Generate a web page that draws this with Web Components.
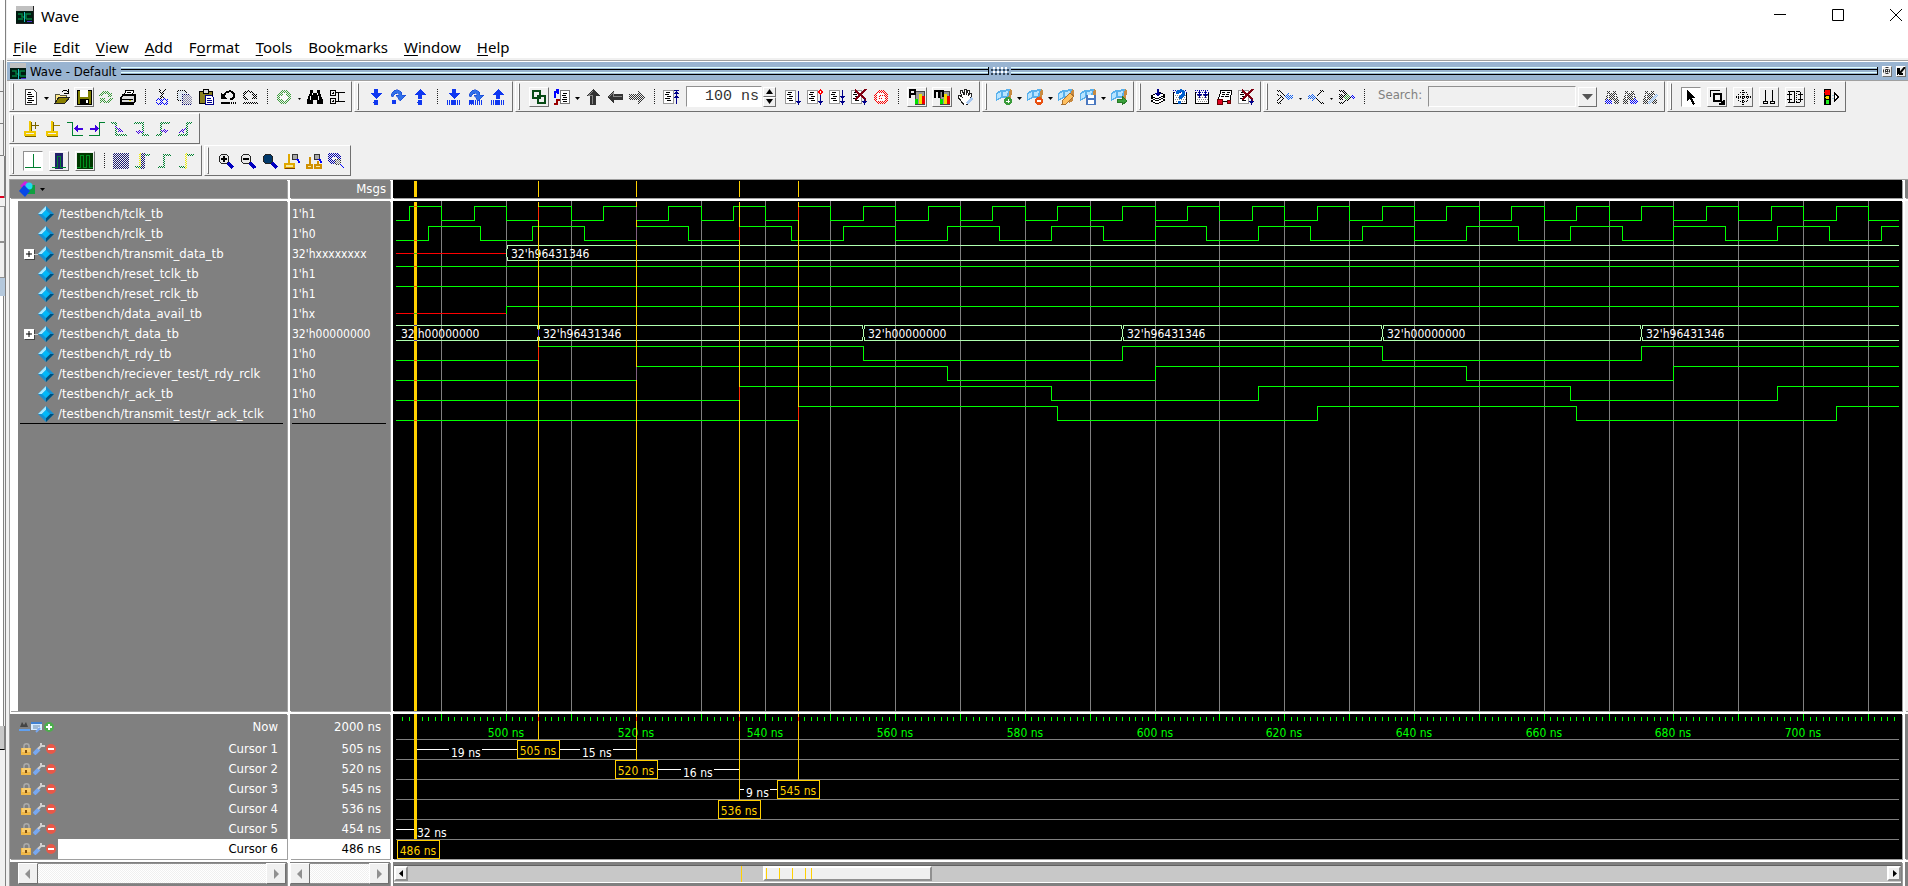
<!DOCTYPE html>
<html lang="en">
<head>
<meta charset="utf-8">
<title>Wave</title>
<style>
html,body{height:100%}
body{margin:0;background:#f0f0f0;font:12px/20px "DejaVu Sans Condensed","Noto Sans",sans-serif;color:#000}
.row{display:flex;gap:2px;height:32px}
</style>
</head>
<body>
<wave-window>
  <title-bar></title-bar>
  <menu-bar></menu-bar>
  <dock-bar></dock-bar>
  <tool-rows>
    <div class="row">
      <tool-bar label="Standard">
        <tool-btn icon="doc" label="New"></tool-btn><tool-drop label="New menu"></tool-drop><tool-btn icon="open" label="Open"></tool-btn><tool-btn icon="save" label="Save" tight raised></tool-btn><tool-btn icon="reload" label="Reload" off></tool-btn><tool-btn icon="print" label="Print"></tool-btn><tool-sep></tool-sep><tool-btn icon="cut" label="Cut" off></tool-btn><tool-btn icon="copy" label="Copy" off></tool-btn><tool-btn icon="paste" label="Paste"></tool-btn><tool-btn icon="undo" label="Undo"></tool-btn><tool-btn icon="redo" label="Redo" off></tool-btn><tool-sep></tool-sep><tool-btn icon="addgreen" label="Add" off></tool-btn><tool-drop small label="Add menu"></tool-drop><tool-btn icon="find" label="Find"></tool-btn><tool-btn icon="tree" label="Expand"></tool-btn>
      </tool-bar>
      <tool-bar label="Step">
        <tool-btn icon="stepin" label="Step"></tool-btn><tool-btn icon="stepover" label="Step over"></tool-btn><tool-btn icon="stepout" label="Step out"></tool-btn><tool-sep></tool-sep><tool-btn icon="stepinc" label="Step current"></tool-btn><tool-btn icon="stepoverc" label="Step over current"></tool-btn><tool-btn icon="stepoutc" label="Step out current"></tool-btn>
      </tool-bar>
      <tool-bar label="Simulate">
        <tool-btn icon="chain" label="Environment" raised></tool-btn><tool-btn icon="restartdoc" label="Restart"></tool-btn><tool-drop label="Restart menu"></tool-drop><tool-btn icon="up" label="Up"></tool-btn><tool-btn icon="left" label="Back"></tool-btn><tool-btn icon="right" label="Forward" off></tool-btn><tool-sep></tool-sep><tool-btn icon="docup" label="Restart"></tool-btn><run-length></run-length><tool-btn icon="run" label="Run"></tool-btn><tool-btn icon="runc" label="Continue"></tool-btn><tool-btn icon="runall" label="Run all"></tool-btn><tool-btn icon="break" label="Break"></tool-btn><tool-btn icon="stop" label="Stop" off></tool-btn><tool-sep></tool-sep><tool-btn icon="perf" label="Performance" raised></tool-btn><tool-btn icon="mem" label="Memory" raised></tool-btn><tool-btn icon="hand" label="Pan"></tool-btn>
      </tool-bar>
      <tool-bar label="Bookmarks">
        <tool-btn icon="bmadd" label="Add bookmark"></tool-btn><tool-drop label="Add menu"></tool-drop><tool-btn icon="bmdel" label="Delete bookmark"></tool-btn><tool-drop label="Delete menu"></tool-drop><tool-btn icon="bmedit" label="Edit bookmark"></tool-btn><tool-btn icon="bmsave" label="Save bookmark"></tool-btn><tool-drop label="Save menu"></tool-drop><tool-btn icon="bmgo" label="Go to bookmark"></tool-btn>
      </tool-bar>
      <tool-bar label="Compile">
        <tool-btn icon="stack" label="Compile"></tool-btn><tool-btn icon="what" label="Compile out of date"></tool-btn><tool-btn icon="calall" label="Compile all"></tool-btn><tool-btn icon="sim" label="Simulate"></tool-btn><tool-btn icon="break" label="Break"></tool-btn>
      </tool-bar>
      <tool-bar label="Search">
        <tool-btn icon="merge1" label="Find previous" off></tool-btn><tool-drop small label="Menu"></tool-drop><tool-btn icon="merge2" label="Find next" off></tool-btn><tool-drop small label="Menu"></tool-drop><tool-btn icon="merge3" label="Filter" off></tool-btn><tool-sep></tool-sep><search-box></search-box><tool-btn icon="findl" label="Search back" off slim></tool-btn><tool-btn icon="findr" label="Search forward" off slim></tool-btn><tool-btn icon="findx" label="Search options" off></tool-btn>
      </tool-bar>
      <tool-bar label="Mode">
        <tool-btn icon="pointer" label="Select" raised wide pressed></tool-btn><tool-btn icon="zoomrect" label="Zoom" raised wide></tool-btn><tool-btn icon="pan" label="Pan" raised wide></tool-btn><tool-btn icon="twocur" label="Two cursor" raised wide></tool-btn><tool-btn icon="editmode" label="Edit" raised wide></tool-btn><tool-sep></tool-sep><tool-btn icon="traffic" label="Stop drawing"></tool-btn>
      </tool-bar>
    </div>
    <div class="row">
      <tool-bar label="Cursor">
        <tool-btn icon="curadd" label="Insert cursor"></tool-btn><tool-btn icon="curdel" label="Delete cursor"></tool-btn><tool-btn icon="prevtr" label="Previous transition"></tool-btn><tool-btn icon="nexttr" label="Next transition"></tool-btn><tool-btn icon="edgea" label="Previous falling edge" off></tool-btn><tool-btn icon="edgeb" label="Next falling edge" off></tool-btn><tool-btn icon="edgec" label="Previous rising edge" off></tool-btn><tool-btn icon="edged" label="Next rising edge" off></tool-btn>
      </tool-bar>
    </div>
    <div class="row">
      <tool-bar label="Expanded time">
        <tool-btn icon="exoff" label="Expanded off" raised wide pressed></tool-btn><tool-btn icon="exdelta" label="Expanded deltas" raised wide></tool-btn><tool-btn icon="exevt" label="Expanded events" raised wide></tool-btn><tool-sep></tool-sep><tool-btn icon="exall" label="Expand all" off></tool-btn><tool-btn icon="excur" label="Expand at cursor" off></tool-btn><tool-btn icon="colall" label="Collapse all" off></tool-btn><tool-btn icon="colcur" label="Collapse at cursor" off></tool-btn>
      </tool-bar>
      <tool-bar label="Zoom">
        <tool-btn icon="zin" label="Zoom in"></tool-btn><tool-btn icon="zout" label="Zoom out"></tool-btn><tool-btn icon="zfull" label="Zoom full"></tool-btn><tool-btn icon="zcur" label="Zoom on cursor"></tool-btn><tool-btn icon="zbetween" label="Zoom between cursors"></tool-btn><tool-btn icon="zother" label="Zoom other" off></tool-btn>
      </tool-bar>
    </div>
  </tool-rows>
  <wave-board></wave-board>
</wave-window>

<script>
const K='fill="none" stroke="#000"';
const doc='<path d="M2.5 .5h8l3 3v12h-11z" fill="#fff" stroke="#444"/><path d="M5 3.5h3M4 5.5h5M5 7.5h6M4 9.5h5M5 11.5h6M4 13.5h5" stroke="#000"/>';
const page=(x)=>`<path d="M.5 1.5h10v13H.5z" fill="#fff" stroke="#999"/><path d="M3 3.5h4M2 5.5h4M4 7.5h4M2 9.5h5M4 11.5h4" stroke="#000"/>${x}`;
const glass=(inner,f)=>`<path d="M10 10l5 5" stroke="#0000c0" stroke-width="3"/><circle cx="6" cy="6" r="5" fill="${f}" stroke="#222"/>${inner}`;
const flag='<path d="M10 2l4-2 2 1-1 11-4 2z" fill="#c88a40"/><path d="M0 4l5-3 9-1-2 9H6l-6 3z" fill="#58b0ec"/><path d="M1 5l4-2v5l-4 2zM7 3l5-1-1 5H7z" fill="#b8e4ff"/>';
const bars='<path d="M6.5 2.5h9v13h-9z" fill="#999" stroke="#444"/><path d="M6 10h3v5H6z" fill="#00e000"/><path d="M10 5h3v10h-3z" fill="#f0e000"/><path d="M13 7h3v8h-3z" fill="#f00000"/>';
const cal='<path d="M1.5 3v11.500h13V3" fill="#fff" stroke="#000"/><path d="M1 1.5h14M2 3.5h13" stroke="#00a" stroke-dasharray="1 1"/><path d="M3 6.5h11M4 8.5h10M3 10.5h11M4 12.5h10" stroke="#888" stroke-dasharray="1 1"/>';
const binoc='<path d="M3 2h3v2h3V2h3v2l3 7v4h-5v-4H6v4H1v-4l2-7z" fill="#333"/><path d="M4 5v5M11 5v5" stroke="#fff"/>';
const down='<path d="M6 0h4v4h4l-6 6-6-6h4z" fill="#1038f0"/>';
const upA='<path d="M8 0l6 6h-4v4H6V6H2z" fill="#1038f0"/>';
const over='<path d="M1 7c1-9 12-7 11-1h4l-6 6-4-6h3c0-3-5-2-6 2z" fill="#3070e8" stroke="#1038d0" stroke-width=".5"/><circle cx="4" cy="13" r="2.500" fill="#1038f0"/>';
const dots='<path d="M1 13.5h14" stroke="#1038f0" stroke-width="5" stroke-dasharray="1 1"/>';
const ball='<circle cx="8" cy="13.500" r="2.500" fill="#1038f0"/>';
const ICON={
 doc,
 open:'<path d="M1 14V5h4l1 1h6v3" fill="#ffe98a" stroke="#554"/><path d="M1 14l4-6h11l-5 6z" fill="#8a8000" stroke="#222"/><path d="M8 3c2-3 4-2 6 0M14 0v4h-4" fill="none" stroke="#000"/>',
 save:'<path d="M1 1h14v14H1z" fill="#808000" stroke="#000"/><path d="M4 1h8v7H4z" fill="#fff"/><path d="M4 10h9v5H4z" fill="#000"/><path d="M10 11h2v3h-2z" fill="#fff"/>',
 reload:'<path d="M1 7c2-6 9-6 11-3l2-2v6H8l2-2c-2-2-5-1-5 1zM15 9c-1 6-8 7-11 4l-2 2V9h6l-2 2c2 2 5 1 5-2z" fill="#3a9a3a"/>',
 print:'<path d="M4 7l2-6h8l-2 6z" fill="#fff" stroke="#000"/><path d="M1 9l2-3h12v6l-2 3H1z" fill="#ddd" stroke="#000" stroke-width="1.5"/><path d="M2 10h11M2 13h11M7 3h4M6 5h4" stroke="#000"/><path d="M9 11h2v1H9z" fill="#cc0"/>',
 cut:'<path d="M5 0l5 10M11 0L6 10" stroke="#000" stroke-width="1.5"/><circle cx="5" cy="12.500" r="2.500" fill="none" stroke="#00f" stroke-width="1.5"/><circle cx="11" cy="12.500" r="2.500" fill="none" stroke="#00f" stroke-width="1.5"/>',
 copy:'<path d="M1 1h7l2 2v8H1z" fill="#cde" stroke="#000"/><path d="M6 5h7l3 3v7H6z" fill="#88a" stroke="#006"/>',
 paste:'<path d="M1 2h13v12H1z" fill="#8a8020" stroke="#000"/><path d="M5 0h5v4H5z" fill="#ddd" stroke="#000"/><path d="M7.5 6.5h6l2 2v7h-8z" fill="#fff" stroke="#00008a"/><path d="M9 9.5h4M9 11.5h5M9 13.5h5" stroke="#00008a"/>',
 undo:'<path d="M4 7C5 1 14 1 14 6c0 3-2 4-4 4" fill="none" stroke="#000" stroke-width="2"/><path d="M1 4v6h6z" fill="#000"/><path d="M1 14h9" stroke="#000" stroke-width="2"/><path d="M11 14h5" stroke="#000" stroke-width="2" stroke-dasharray="1 1"/>',
 redo:'<path d="M12 7C11 1 2 1 2 6c0 3 2 4 4 4" fill="none" stroke="#000" stroke-width="2"/><path d="M15 4v6H9z" fill="#000"/><path d="M1 14h15" stroke="#000" stroke-width="2"/>',
 addgreen:'<circle cx="8" cy="8" r="7" fill="#3da03d"/><path d="M8 4v8M4 8h8" stroke="#fff" stroke-width="3"/>',
 find:'<path d="M3 1h3v3h4V1h3v3l3 7v4h-6v-4H6v4H0v-4l3-7z" fill="#000"/><path d="M3.5 7v4M11.5 7v4M5.5 4v2M10.5 4v2" stroke="#fff"/>',
 tree:`<path d="M1.5 1.5h5v5h-5zM1.5 9.5h5v5h-5zM7 3.5h9M9.5 3v9M7 12.5h9M3 4h2M3 12h2M4 3v2M4 11v2" ${K}/>`,
 stepin:down+ball, stepover:over, stepout:upA+ball,
 stepinc:dots+down+ball, stepoverc:dots+over, stepoutc:dots+upA+ball,
 chain:'<g fill="none" stroke="#064a14" stroke-width="2"><path d="M2 2h7v7H2zM7 7h7v7H7z"/></g>',
 restartdoc:'<path d="M6.5 1.5h9v13h-9z" fill="#fff" stroke="#777"/><path d="M9 4.5h4M8 6.5h4M9 8.5h4M8 10.5h5M9 12.5h4" stroke="#000"/><path d="M1 9V3h3M2 1h2v4" fill="none" stroke="#00f" stroke-width="1.5"/><path d="M0 15h3v-4h3" fill="none" stroke="#900" stroke-width="2"/>',
 up:'<path d="M8 0l7 7h-4v9H5V7H1z" fill="#333"/><path d="M8 2l-4 4h3v9" fill="none" stroke="#888"/>',
 left:'<path d="M0 8l7-7v4h9v6H7v4z" fill="#333"/><path d="M2 8l4-4v3h9" fill="none" stroke="#888"/>',
 right:'<path d="M16 8L9 1v4H0v6h9v4z" fill="#333"/>',
 docup:page('<path d="M13.5 3v12M11 1.5h5" stroke="#00008a"/><path d="M11 5l2.500-3L16 5zM11 9l2.500-3L16 9z" fill="#00008a"/>'),
 run:page('<path d="M13.5 2v11" stroke="#00008a"/><path d="M11 12h5l-2.500 4z" fill="#00008a"/>'),
 runc:page('<path d="M13.5 6v7" stroke="#00008a"/><path d="M13.5 1l2 2-2 2-2-2z" fill="#fff" stroke="#f00"/><path d="M11 12h5l-2.500 4z" fill="#00008a"/>'),
 runall:page('<path d="M13.5 1v12" stroke="#00008a"/><path d="M11 7h5l-2.500 4zM11 12h5l-2.500 4z" fill="#00008a"/>'),
 break:page('<path d="M4 1l11 10M15 0L4 11" stroke="#800010" stroke-width="2"/><path d="M13.5 10v3" stroke="#00008a"/><path d="M11 12h5l-2.500 4z" fill="#00008a"/>'),
 stop:'<path d="M5 1h6l4 4v6l-4 4H5l-4-4V5z" fill="#f00"/><path d="M11 5H5v6h6V8H7" fill="none" stroke="#fff" stroke-width="1.5"/>',
 perf:bars+'<path d="M1 9V1h5v4H1" fill="none" stroke="#000" stroke-width="2"/>',
 mem:bars+'<path d="M1 9V2h4v7M5 2h4v6" fill="none" stroke="#000" stroke-width="2"/>',
 hand:'<path d="M4 12L1 8l1-2 3 2-2-6 2-1 2 5V0h2v6l2-5 2 1-2 5 3-3 1 1-3 9-3 2H7z" fill="#fff" stroke="#222"/><path d="M9 14l5-6 2 2-5 6z" fill="#a8c8f0"/>',
 bmadd:flag+'<circle cx="12" cy="12" r="4" fill="#3a9a3a"/><path d="M12 10v4M10 12h4" stroke="#fff"/>',
 bmdel:flag+'<circle cx="12" cy="12" r="4" fill="#e85010"/><path d="M10 12h4" stroke="#fff" stroke-width="1.5"/>',
 bmedit:flag+'<path d="M4 15l1-4 7-7 4 3-8 8z" fill="#ffc060" stroke="#a87030"/>',
 bmsave:flag+'<path d="M6 6h10v10H6z" fill="#4a78c0"/><path d="M8 6h6v3H8zM8 11h6v4H8z" fill="#fff"/>',
 bmgo:flag+'<path d="M6 10h5V7l5 5-5 4v-3H6z" fill="#3aa03a" stroke="#277a27"/>',
 stack:'<g fill="#fff" stroke="#000"><path d="M1 12l8-4 6 3-8 4z"/><path d="M1 9l8-4 6 3-8 4z"/><path d="M1 7l8-4 6 3-8 4z"/></g><path d="M8 0v5" stroke="#00008a" stroke-width="2"/><path d="M5 4h6L8 8z" fill="#00008a"/>',
 what:cal+'<path d="M5 5c0-4 7-4 7-1 0 3-4 3-4 6" fill="none" stroke="#0060d0" stroke-width="3"/><path d="M6 12h3v3H6z" fill="#0060d0"/>',
 calall:cal+'<path d="M5.5 2v4M11.5 2v4" stroke="#00008a"/><path d="M3 5h5L5.5 9zM9 5h5l-2.500 4z" fill="#00008a"/>',
 sim:'<path d="M5 1h11l-2 11H2z" fill="#fff" stroke="#000"/><path d="M6 3.5h3M11 3.5h3M6 5.5h3M10 5.5h3M5 7.5h3M9 7.5h4" stroke="#000"/><circle cx="4" cy="13" r="3" fill="#e00020" stroke="#600"/><circle cx="13" cy="13" r="2" fill="#e00020" stroke="#600"/>',
 merge1:'<path d="M0 2h3l4 5M0 14h3l4-5M0 5l5 3-5 3" '+K+' stroke-width="1.5"/><path d="M7 8l5-4v2h4v4h-4v2z" fill="#1060f0"/>',
 merge2:'<path d="M16 2h-3L9 7M16 14h-3L9 9" '+K+' stroke-width="1.5"/><path d="M9 8L4 4v2H0v4h4v2z" fill="#1060f0"/>',
 merge3:'<path d="M0 2h4l4 4M0 14h4l4-4M0 6h4M0 10h4M0 8h4" '+K+' stroke-width="1.5"/><path d="M8 4l4 4-4 4-4-4z" fill="#3a9a3a" stroke="#000"/><path d="M12 8h4M14 6v4" stroke="#00f" stroke-width="2"/>',
 findl:binoc+'<path d="M0 12l4-3v2h4v4H2z" fill="#00f"/>', findr:binoc+'<path d="M16 12l-4-3v2H8v4h6z" fill="#00f"/>',
 findx:binoc+'<path d="M5 14l9-9 2 2-8 9z" fill="#8ab8f0"/>',
 pointer:'<path d="M4 1l8 8H9l3 6-2 1-3-6-3 2z" fill="#000"/>',
 zoomrect:`<path d="M1.5 8V1.5H11" ${K} stroke-width="1.5"/><path d="M5 5h7v7H5z" fill="none" stroke="#000" stroke-width="2"/><path d="M12 12l3 3M15 11v4h-5" ${K} stroke-width="2"/>`,
 pan:`<g ${K} stroke-dasharray="1 1"><path d="M8.5 1v15M1 8.5h15M7.5 1v15M1 7.5h15M5 3.5h7M5 12.5h7M3.5 5v7M12.5 5v7"/></g>`,
 twocur:`<path d="M4.5 1v11M11.5 1v11M2.5 12.5h4v2h-4zM9.5 12.5h4v2h-4z" ${K}/>`,
 editmode:`<path d="M1 2.5h6v11H1M0 5.5h5M0 10.5h5M2.5 3v5M2.5 8v5" ${K}/><path d="M9.500 2v12" ${K} stroke-dasharray="1 1"/><path d="M9 2.5h4M9 13.5h4M11 5.5h5M11 10.5h5M13.5 3v5M13.5 8v5" ${K}/>`,
 traffic:'<path d="M1 0h7v16H1z"/><circle cx="4.500" cy="3.500" r="3" fill="#f00"/><circle cx="4.500" cy="8.500" r="2" fill="#f0e000"/><circle cx="4.500" cy="13" r="2" fill="#20f020"/><path d="M11.5 4v8l4-4z" fill="#fff" stroke="#000"/><path d="M9 6.5h2M9 9.5h2" stroke="#9cd"/>',
 curadd:'<path d="M7 0v10M2 11h10v3H2z" fill="none" stroke="#f0c800" stroke-width="2"/><path d="M8.5 1v9M2 15.5h11M9 4.5h7M12.5 1v7" stroke="#7a6400"/>',
 curdel:'<path d="M7 0v10M2 11h10v3H2z" fill="none" stroke="#f0c800" stroke-width="2"/><path d="M8.5 1v9M2 15.5h11" stroke="#7a6400"/><path d="M9 4.5h6" stroke="#a08000"/>',
 prevtr:'<path d="M0 1.5h5.500v13H16" fill="none" stroke="#008030"/><path d="M7 7.5l4-4v3h5v2h-5v3z" fill="#4000e0"/>',
 nexttr:'<path d="M16 1.5h-5.500v13H0" fill="none" stroke="#008030"/><path d="M10 7.5l-4-4v3H1v2h5v3z" fill="#4000e0"/>',
 edgea:'<path d="M0 2h5v12h11" fill="none" stroke="#008030" stroke-width="2"/><path d="M4 6l8 5M8 7v4" stroke="#4000e0" stroke-width="2"/>',
 edgeb:'<path d="M1 2h9v12h6" fill="none" stroke="#008030" stroke-width="2"/><path d="M3 11h7M6 9v4" stroke="#4000e0" stroke-width="2"/>',
 edgec:'<path d="M1 14h5V2h9" fill="none" stroke="#008030" stroke-width="2"/><path d="M6 10h7M10 8v4" stroke="#4000e0" stroke-width="2"/>',
 edged:'<path d="M1 14h9V2h5" fill="none" stroke="#008030" stroke-width="2"/><path d="M2 12l7-5M6 8v4" stroke="#4000e0" stroke-width="2"/>',
 exoff:'<path d="M8.5 1v14M0 14.5h16" stroke="#008030"/>',
 exdelta:'<path d="M4 0h8v16H4z" fill="#20206a"/><path d="M1 14.5h5.500v-11h3v11H15" fill="none" stroke="#008030"/>',
 exevt:'<path d="M0 0h16v16H0z" fill="#003800"/><path d="M0 14.5h3.500v-12h3v12h3v-12h3v12H16" fill="none" stroke="#009020"/>',
 exall:'<path d="M0 0h16v16H0z" fill="#1a1a70"/>',
 excur:'<path d="M5 0h5v16H5z" fill="#1a1a70"/><path d="M5 0v16" stroke="#ee0" stroke-width="2"/><path d="M0 14h6M10 2h5" stroke="#008030" stroke-width="2"/>',
 colall:'<path d="M1 14h6V2h7" fill="none" stroke="#008030" stroke-width="2"/>',
 colcur:'<path d="M0 14h7V2h8" fill="none" stroke="#008030" stroke-width="2"/><path d="M7 0v16" stroke="#ee0" stroke-width="2"/>',
 zin:glass('<path d="M6 3v6M3 6h6" stroke="#000" stroke-width="2"/>','#e8e8e8'), zout:glass('<path d="M3 6h6" stroke="#000" stroke-width="2"/>','#e8e8e8'), zfull:glass('','#00386a'),
 zcur:'<path d="M5 1v9M1 11h9v4H1z" fill="#f8e8a0" stroke="#e0a800" stroke-width="2"/><path d="M1 15.5h10" stroke="#804000"/><circle cx="11" cy="4" r="3" fill="#aaa" stroke="#333"/><path d="M13 6l3 4" stroke="#00f" stroke-width="2"/>',
 zbetween:'<path d="M4 4v7M1 12h5v3H1zM12 8v4M9 12h6v3H9z" fill="#f8e8a0" stroke="#d09000" stroke-width="1.5"/><circle cx="11" cy="4" r="3" fill="#aaa" stroke="#333"/><path d="M13 6l3 4" stroke="#00f" stroke-width="2"/>',
 zother:'<path d="M1 1h9v7H1zM3 3h9v7H3z" fill="none" stroke="#00a" stroke-width="1.5"/><circle cx="10" cy="9" r="3" fill="#888" stroke="#333"/><path d="M12 11l4 4" stroke="#00f" stroke-width="2"/>'
};
const svg=(inner,w=16,h=16,extra='')=>`<svg width="${w}" height="${h}" viewBox="0 0 ${w} ${h}" ${extra} aria-hidden="true">${inner}</svg>`;
const appIcon='<path d="M0 0h18v18H0z" fill="#222"/><path d="M0 0h17v5H0z" fill="#c0c0c0"/><path d="M0 5h17v12H0z" fill="#001a10"/><path d="M2 8h4v3h3M2 13h5M10 13V8h5M10 13h6" fill="none" stroke="#008040" stroke-width="1.5"/><path d="M8.5 6v10" stroke="#20c0c0"/><path d="M11 15.5h5" stroke="#5030d0"/>';
const define=(name,css,html,hook)=>customElements.define(name,class extends HTMLElement{
  connectedCallback(){ if(this.shadowRoot) return;
    this.attachShadow({mode:'open'}).innerHTML=`<style>:host,*{box-sizing:border-box}button{font:inherit;color:inherit;border:0;padding:0;margin:0;background:none}${css}</style>${typeof html==='function'?html(this):html}`;
    if(hook) hook(this.shadowRoot,this); }
});

define('tool-btn',`:host{display:flex;flex:none;width:22px;justify-content:center;align-items:center}
:host([slim]){width:18px}:host([raised]){width:25px}:host([wide]){width:26px}:host([tight]){width:22px}
button{width:16px;height:16px;display:flex;align-items:center;justify-content:center}
:host([raised]) button{width:20px;height:20px;border:1px solid;border-color:#fff #707070 #707070 #fff}
:host([pressed]) button{background:#fff;border-color:#909090 #fff #fff #909090}
:host([off]) svg{mask:conic-gradient(#000 25%,transparent 0 50%,#000 0 75%,transparent 0) 0 0/2px 2px}
svg{flex:none}`,
 el=>`<button type="button" aria-label="${el.getAttribute('label')}">${svg(ICON[el.getAttribute('icon')],16,16,'shape-rendering="crispEdges"')}</button>`);
define('tool-drop',`:host{display:flex;flex:none;width:9px;justify-content:center;align-items:center}`,
 el=>`<button type="button" aria-label="${el.getAttribute('label')}">${svg(el.hasAttribute('small')?'<path d="M1 1h3L2.5 3z"/>':'<path d="M0 0h5L2.5 3z"/>',5,4)}</button>`);
define('tool-sep',`:host{display:block;flex:none;width:12px;align-self:center;height:15px;background:repeating-linear-gradient(#222 0 1px,transparent 1px 2px) 6px 0/1px 100% no-repeat}`,'');
define('tool-bar',`:host{display:flex;align-items:stretch;height:31px;padding:0 3px 0 2px;border:1px solid;border-color:#fff #707070 #707070 #fff}
i{width:2px;margin:1px 6px 1px 0;flex:none;border:1px solid;border-color:#fff #707070 #707070 #fff}
div{display:flex}`,el=>`<i></i><div role="toolbar" aria-label="${el.getAttribute('label')}"><slot></slot></div>`);
define('run-length',`:host{display:flex;align-items:center;margin:0 6px 0 4px;gap:1px}
input{width:76px;height:21px;border:1px solid;border-color:#909090 #fff #fff #909090;background:#fff;text-align:right;padding:0 2px;font:15px "Liberation Mono",monospace;color:#333}
div{display:flex;flex-direction:column}button{width:13px;height:10px;display:flex;align-items:center;justify-content:center;border:1px solid;border-color:#fff #707070 #707070 #fff}`,
`<input type="text" value="100 ns" aria-label="Run length"><div><button type="button" aria-label="More">${svg('<path d="M0 5h7L3.5 0z"/>',7,5)}</button><button type="button" aria-label="Less">${svg('<path d="M0 0h7L3.5 5z"/>',7,5)}</button></div>`);
define('search-box',`:host{display:flex;align-items:center;padding:0 6px 0 8px;font-size:13px}label{width:50px;color:#808080;margin-bottom:3px}
input{width:148px;height:21px;border:1px solid;border-color:#909090 #fff #fff #909090;background:#f0f0f0;margin-right:2px}
button{width:19px;height:20px;border:1px solid;border-color:#fff #707070 #707070 #fff;display:flex;align-items:center;justify-content:center}`,
`<label for="q">Search:</label><input id="q" type="text" disabled><button type="button" aria-label="History">${svg('<path d="M0 0h11L5.5 6z" fill="#555"/>',11,6)}</button>`);
define('tool-rows',`:host{display:flex;flex-direction:column;padding:0 0 2px 2px}`,`<slot></slot>`);

define('title-bar',`:host{display:flex;align-items:center;height:30px;background:#fff;padding-left:9px;font:15px/20px "Noto Sans",sans-serif}
h1{font:inherit;margin:0 0 0 7px;flex:1;padding-top:2px}nav{display:flex;align-items:center;gap:46px;padding-right:6px}button{width:12px;height:12px;display:block}svg{display:block}`,
`${svg(appIcon,18,18)}<h1>Wave</h1><nav><button type="button" aria-label="Minimize">${svg('<path d="M0 5.5h12" stroke="#000"/>',12,12)}</button><button type="button" aria-label="Maximize">${svg('<path d="M.5.5h11v11H.5z" fill="none" stroke="#000"/>',12,12)}</button><button type="button" aria-label="Close">${svg('<path d="M0 0l12 12M12 0L0 12" stroke="#000"/>',12,12)}</button></nav>`);
define('menu-bar',`:host{display:flex;gap:16px;height:28px;background:#fff;font:15px/20px "Noto Sans",sans-serif;padding:7px 0 0 6px}
button{height:20px;white-space:nowrap}u{text-underline-offset:2px}`,
['<u>F</u>ile','<u>E</u>dit','<u>V</u>iew','<u>A</u>dd','F<u>o</u>rmat','<u>T</u>ools','Boo<u>k</u>marks','<u>W</u>indow','<u>H</u>elp'].map(t=>`<button type="button">${t}</button>`).join(''));
define('dock-bar',`:host{display:flex;align-items:center;margin-top:2px;height:21px;background:#99b4d1;border-top:1px solid #a0a0a0;border-bottom:1px solid #a0a0a0;box-shadow:inset 0 1px #fff;padding:1px 2px 0 3px}
svg{flex:none}h2{font:13px/17px "DejaVu Sans Condensed","Noto Sans",sans-serif;margin:0 5px 0 4px;white-space:nowrap}
.l{flex:1;height:8px;border-right:1px solid #000;background:linear-gradient(#e0ffff 0 1px,transparent 1px 2px,#000 2px 3px,transparent 3px 5px,#e0ffff 5px 6px,transparent 6px 7px,#000 7px 8px)}
.g{width:18px;height:8px;margin:0 2px;background:conic-gradient(#fff 25%,transparent 0 50%,#345 0 75%,transparent 0) 0 0/4px 4px}
button{width:10px;height:11px;background:#f0f0f0;border:1px solid;border-color:#fff #707070 #707070 #fff;margin:0 0 0 4px}button svg{display:block}`,
`${svg(appIcon,16,16)}<h2>Wave - Default</h2><div class="l"></div><div class="g"></div><div class="l"></div><button type="button" aria-label="Undock">${svg('<path d="M4 0v8M0 4h8" stroke="#333" stroke-dasharray="1 1" stroke-width="3"/>',8,9)}</button><button type="button" aria-label="Zoom pane">${svg('<path d="M0 8V2h3M2 7h4M2 2v5M8 0L3 6" stroke="#000" stroke-width="2" fill="none"/>',8,9)}</button>`);

const SIG=[["tclk_tb","1'h1"],["rclk_tb","1'h0"],["transmit_data_tb","32'hxxxxxxxx",1],["reset_tclk_tb","1'h1"],["reset_rclk_tb","1'h1"],["data_avail_tb","1'hx"],["t_data_tb","32'h00000000",1],["t_rdy_tb","1'h0"],["reciever_test/t_rdy_rclk","1'h0"],["r_ack_tb","1'h0"],["transmit_test/r_ack_tclk","1'h0"]];
const CUR=[505,520,545,536,454,486];
const gem='<path d="M8 0l8 8-8 8-8-8z" fill="#1890d0"/><path d="M8 0L0 8h4l4-4z" fill="#a8e8ff"/><path d="M8 16l8-8h-4l-4 4z" fill="#00507c"/><path d="M8 4l4 4-4 4-4-4z" fill="#00b8f8"/>';

define('signal-names',`:host{display:block;background:#808080;border-left:8px solid #fff;color:#fff;padding-top:3px;min-width:0;font-size:13px}
ul{list-style:none;margin:0;padding:0}li{display:flex;align-items:center;height:20px;padding-left:20px;white-space:nowrap}li.p{padding-left:6px}span{margin-left:4px}
button{width:10px;height:10px;background:#fff;box-shadow:1px 1px #444}i{width:4px;height:1px;background:#ccc}svg{flex:none;display:block}
hr{margin:-1px 4px 0 2px;border:0;height:1px;background:#000}`,
`<ul>${SIG.map(s=>`<li class="${s[2]?'p':''}">${s[2]?`<button type="button" aria-label="Expand">${svg('<path d="M5 2v6M2 5h6" stroke="#000"/>',10,10)}</button><i></i>`:''}${svg(gem)}<span>/testbench/${s[0]}</span></li>`).join('')}</ul><hr>`);
define('signal-values',`:host{display:block;background:#808080;color:#fff;padding-top:3px}ul{list-style:none;margin:0;padding:0}li{height:20px;padding-left:2px;white-space:nowrap}hr{margin:-1px 4px 0 2px;border:0;height:1px;background:#000}`,
`<ul>${SIG.map(s=>`<li>${s[1]}</li>`).join('')}</ul><hr>`);
const lock='<path d="M3 5V3c0-3 5-3 5 0v3" fill="none" stroke="#aaa" stroke-width="1.5"/><path d="M0 5h10v7H0z" fill="#f0b848"/><path d="M1 6h8M1 8h8" stroke="#ffe098"/><path d="M4 7h2v3H4z" fill="#805010"/>';
const wrench='<path d="M1 11l5-5" stroke="#78a8f0" stroke-width="4"/><path d="M5 6l4-4M8 0v3h4" stroke="#d0d0d0" stroke-width="2" fill="none"/>';
const minus='<circle cx="6" cy="6" r="5" fill="#e85848"/><path d="M3 6h6" stroke="#fff" stroke-width="2"/>';
define('cursor-names',`:host{display:block;background:#808080;color:#fff;font-size:13px}div{display:flex;align-items:center;height:20px;padding-left:11px}div.n{height:25px;padding-left:9px}
span{flex:1;text-align:right;padding-right:9px;margin-left:1px}.s span{background:#fff;color:#000}button{display:flex;width:12px;height:12px}`,
`<div class="n"><button type="button" aria-label="Names">${svg('<path d="M1 6l2-5 2 3 2-3 2 5z" fill="#444"/><path d="M0 9h11" stroke="#60a0f0" stroke-width="2"/>',12,12)}</button><button type="button" aria-label="Grid">${svg('<path d="M0 1h11v8H0z" fill="#d8ecff"/><path d="M0 1h11v2H0z" fill="#4080d0"/><path d="M2 5h7M2 7h5" stroke="#68a"/><path d="M5 11l4-4" stroke="#78a8f0" stroke-width="2"/>',12,12)}</button><button type="button" aria-label="Add cursor">${svg('<circle cx="6" cy="6" r="5" fill="#4cae4c"/><path d="M6 3v6M3 6h6" stroke="#fff" stroke-width="2"/>',12,12)}</button><span>Now</span></div>`+
CUR.map((c,i)=>`<div class="${i==5?'s':''}"><button type="button" aria-label="Lock">${svg(lock,12,12)}</button><button type="button" aria-label="Edit">${svg(wrench,12,12)}</button><button type="button" aria-label="Remove">${svg(minus,12,12)}</button><span>Cursor ${i+1}</span></div>`).join(''));
define('cursor-times',`:host{display:block;background:#808080;color:#fff;text-align:right;font-size:13px}div{height:20px;padding-right:9px}div.n{height:25px;line-height:25px}.s{background:#fff;color:#000}`,
`<div class="n">2000 ns</div>`+CUR.map((c,i)=>`<div class="${i==5?'s':''}">${c} ns</div>`).join(''));

/* time (ns) to horizontal position in the wave panes */
const X=t=>Math.floor(110.5+6.4855*(t-500));
const rect=(x,y,w,h,c)=>`<rect x="${x}" y="${y}" width="${Math.max(0,w)}" height="${h}" fill="${c}"/>`;
const Y='#ffd000',G='#00ff00';
const thin=[505,520,536,545];
function trace(W,hi,lo,level,edges){let s='',x=0;for(const t of edges){const n=X(t);if(n>=W)break;s+=rect(x,level?hi:lo,n-x+1,1,G)+rect(n,hi,1,lo-hi+1,G);x=n;level=!level}return s+rect(x,level?hi:lo,W-x,1,G)}
function bus(W,y,segs){const c='#b0ffb0';let s='';segs.forEach(([t,txt],i)=>{const a=t?X(t):0,b=segs[i+1]?X(segs[i+1][0]):W;
  s+=rect(a+(t?1:0),y,b-a-1,1,c)+rect(a+(t?1:0),y+15,b-a-1,1,c);
  if(t)s+=rect(a+1,y,1,4,c)+rect(a+1,y+12,1,4,c)+rect(a,y+4,1,8,c)+(i?rect(a-1,y,1,4,c)+rect(a-1,y+12,1,4,c):'');
  if(a+85<W)s+=`<text x="${a+5}" y="${y+13}" fill="#fff">${txt}</text>`});return s}
function clock(from,half){const r=[];for(let t=from;t<1200;t+=half)r.push(t);return r}
function traces(W){
  let s='';for(let t=490;X(t)<W;t+=10)s+=`<rect x="${X(t)}" y="0" width="1" height="100%" fill="#808080"/>`;
  const hi=i=>5+20*i,lo=i=>19+20*i,A="32'h00000000",B="32'h96431346";
  const row=(i,e)=>trace(W,hi(i),lo(i),0,e);
  s+=row(0,clock(485,5))+row(1,clock(488,8));
  s+=rect(0,52,X(500),1,'#f00')+bus(W,44,[[500,B]]);
  s+=rect(0,65,W,1,G)+rect(0,85,W,1,G);
  s+=rect(0,112,X(500),1,'#f00')+rect(X(500),105,1,8,G)+rect(X(500),105,W-X(500),1,G);
  s+=bus(W,124,[[0,A],[505,B],[555,A],[595,B],[635,A],[675,B]]);
  s+=row(7,[505,555,595,635,675])+row(8,[520,568,600,648,680])+row(9,[536,584,616,664,696])+row(10,[545,585,625,665,705]);
  for(const t of thin)s+=`<rect x="${X(t)}" y="1" width="1" height="100%" fill="${Y}"/>`;
  s+=`<rect x="${X(486)-1}" y="1" width="3" height="100%" fill="${Y}"/>`;
  const R='#ff2800',P='#806080';
  for(const [t,i,c] of [[505,0,R],[520,0,P],[545,0,R],[520,1,P],[536,1,R],[505,7,R],[520,8,P],[536,9,R],[545,10,R]])s+=rect(X(t),hi(i)+1,1,13,c);
  s+=rect(X(505),129,1,6,'#4030d0');
  for(const y of [5,39,65,85,159,179,199,219])s+=rect(X(486)-1,y,3,1,'#ff5000');
  for(const y of [52,112])s+=rect(X(486)-1,y,3,1,'#40c000');
  for(const y of [124,139])s+=rect(X(486)-1,y,3,1,'#5030a0');
  return s}
function ruler(W){
  let s='';for(let t=484;X(t)<W;t++){const m=t%10==0;s+=rect(X(t),m?0:3,1,m?7:4,G)}
  for(let i=0;i<6;i++)s+=rect(0,25+20*i,W,1,'#808080');
  for(let t=500;X(t)+22<W;t+=20)s+=`<text x="${X(t)}" y="23" fill="${G}" text-anchor="middle">${t} ns</text>`;
  const tag=(t,i,x)=>rect(x,26+20*i,43,19,Y)+rect(x+1,27+20*i,41,17,'#000')+`<text x="${x+21}" y="${41+20*i}" fill="${Y}" text-anchor="middle">${t} ns</text>`;
  const box=(t,i)=>rect(X(t),0,1,26+20*i,Y)+tag(t,i,X(t)-21);
  const gap=(x1,x2,i,l,tx,w)=>rect(x1,35+20*i,tx-2-x1,1,'#fff')+(x2>tx+w?rect(tx+w,35+20*i,x2-tx-w,1,'#fff'):'')+`<text x="${tx}" y="${43+20*i}" fill="#fff">${l} ns</text>`;
  s+=gap(X(486),X(505)-21,0,19,55,31)+gap(X(505)+21,X(520),0,15,186,31)+gap(X(520)+21,X(536),1,16,287,31)+gap(X(536),X(545)-21,2,9,350,24)+gap(0,0,4,32,21,31);
  s+=box(505,0)+box(520,1)+box(545,2)+box(536,3);
  s+=rect(X(486)-1,0,3,125,Y)+tag(486,5,1);
  for(const t of thin)s+=rect(X(t),3,1,4,'#ff2800');
  return s}
const heads=()=>thin.map(t=>rect(X(t),1,1,16,Y)).join('')+rect(X(486)-1,1,3,16,Y);
define('wave-pane',`:host{display:block;background:#000;padding:0 3px;min-width:0;overflow:hidden;position:relative}svg{display:block;width:100%;height:100%;font-size:12px}`,
 el=>`<svg shape-rendering="crispEdges" role="img" aria-label="${el.getAttribute('kind')}"></svg>`,
 (root,el)=>{const s=root.querySelector('svg'),draw={heads,traces,ruler}[el.getAttribute('kind')];
  const paint=()=>{const w=el.clientWidth-6;if(w>0)s.innerHTML=draw(w)};
  paint();new ResizeObserver(paint).observe(el)});

define('scroll-strip',`:host{display:flex;background:#808080;padding:1px 1px 2px 8px;min-width:0}:host([v]){padding-left:0}
.t{flex:1;background:conic-gradient(#fff 25%,#f0f0f0 0 50%,#fff 0 75%,#f0f0f0 0) 0 0/2px 2px;border:1px solid #909090;border-width:1px 0}
button{width:20px;background:#f0f0f0;border:1px solid;border-color:#fff #707070 #707070 #fff;display:flex;align-items:center;justify-content:center}`,
`<button type="button" aria-label="Left">${svg('<path d="M5 0v10L0 5z" fill="#909090"/>',6,10)}</button><div class="t"></div><button type="button" aria-label="Right">${svg('<path d="M1 0v10l5-5z" fill="#909090"/>',6,10)}</button>`);
define('time-scroll',`:host{display:block;background:#808080;padding:4px 1px 4px;min-width:0}
.b{display:flex;height:16px;background:#c8c8c8;box-shadow:0 -1px #606060,0 1px #fff}
button{width:14px;height:15px;background:#f0f0f0;border:2px solid;border-color:#fff #909090 #909090 #fff;display:flex;align-items:center;justify-content:center;flex:none}
.t{flex:1;display:grid;grid-template-columns:355fr 169fr 954fr}.m{background:linear-gradient(${Y},${Y}) 94% 0/1px 100% no-repeat}.h{background:#f0f0f0;height:15px;border:2px solid;border-color:#fff #909090 #909090 #fff;display:flex}.h i{width:1px;background:${Y};margin-left:12px}.h i:first-child{margin-left:1px}.h i:last-child{margin-left:5px}`,
`<div class="b"><button type="button" aria-label="Left">${svg('<path d="M4 0v7L0 3.5z"/>',5,7)}</button><div class="t"><div class="m"></div><div class="h"><i></i><i></i><i></i><i></i><i></i></div><div></div></div><button type="button" aria-label="Right">${svg('<path d="M1 0v7l4-3.500z"/>',5,7)}</button></div>`);
define('head-cell',`:host{display:flex;align-items:center;background:#808080;color:#fff;justify-content:flex-end;padding-right:4px;font-size:13px}:host([lead]){justify-content:flex-start;padding-left:9px;gap:4px}`,`<slot></slot>`);

define('wave-board',`:host{flex:1;display:grid;margin-left:2px;border-top:1px solid #a0a0a0;border-left:1px solid #a0a0a0;background:#fff;gap:3px;grid-template-columns:277px 100px minmax(0,1fr) 3px;grid-template-rows:18px minmax(240px,1fr) 145px 24px}
:host>*:not(style){box-shadow:1px 1px #a0a0a0}.e{background:#808080}.w{background:#f0f0f0}`,
`<head-cell lead>${svg('<path d="M1 5l5-5 5 3-4 5z" fill="#d020e0"/><path d="M7 4h9v9H7z" fill="#10a040"/><circle cx="10" cy="5" r="3.500" fill="#20d8f0"/><path d="M5 4l6 6-5 6-6-6z" fill="#0848e8"/>',17,16)}${svg('<path d="M0 0h5L2.5 3z"/>',5,3)}</head-cell>
<head-cell>Msgs</head-cell><wave-pane kind="heads"></wave-pane><div class="e"></div>
<signal-names></signal-names><signal-values></signal-values><wave-pane kind="traces"></wave-pane><div class="w"></div>
<cursor-names></cursor-names><cursor-times></cursor-times><wave-pane kind="ruler"></wave-pane><div class="e"></div>
<scroll-strip></scroll-strip><scroll-strip v></scroll-strip><time-scroll></time-scroll><div class="e"></div>`);
define('back-edge',`:host{display:block;width:6px;background:#f0f0f0;border-right:1px solid #808080;flex:none}
div{border-right:1px solid #808080}.a{height:60px;background:#fff;border:0}.b{height:32px;border-bottom:1px solid #808080;margin-right:1px}.c{height:40px}.d{height:2px;background:#e00020;margin-bottom:8px}.f{height:36px;border:1px solid #909090;border-left:0}.s{height:18px;background:#b4c8dc;border:0}.g{height:430px;background:#fff;margin-right:1px}.k{height:24px;background:#c8c8c8;border-bottom:1px solid #000}`,
`<div class="a"></div><div class="b"></div><div class="b"></div><div class="b"></div><div class="c"></div><div class="d"></div><div class="f"></div><div class="f"></div><div class="s"></div><div class="g"></div><div class="k"></div>`);
define('wave-window',`:host{display:flex;min-height:100vh}main{flex:1;min-width:0;display:flex;flex-direction:column;border-left:1px solid #f0f0f0}`,
`<back-edge></back-edge><main><slot></slot></main>`);
</script>
</body>
</html>
